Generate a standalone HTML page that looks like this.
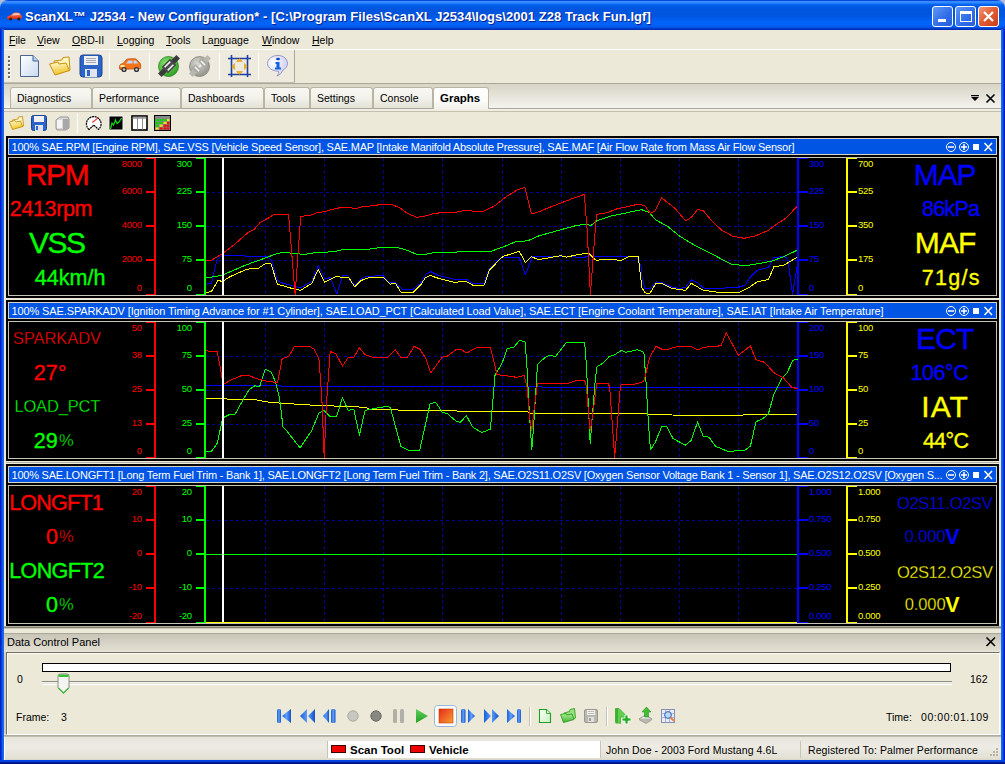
<!DOCTYPE html>
<html><head><meta charset="utf-8">
<style>
*{margin:0;padding:0;box-sizing:border-box}
html,body{width:1005px;height:764px;overflow:hidden;background:#ECE9D8;font-family:"Liberation Sans",sans-serif;font-size:11px;color:#000}
body{position:relative}
.a{position:absolute}
.nw{white-space:nowrap}
#title{left:0;top:0;width:1005px;height:30px;border-radius:8px 8px 0 0;background:linear-gradient(180deg,#0848E0 0px,#0848E0 1px,#3A8EFF 1px,#3088FF 3px,#0C6CF8 4px,#0060EC 5px,#005AE4 7px,#0055DE 9px,#0055DE 15px,#005AEA 18px,#0064F8 22px,#0062F6 25px,#0058EC 27px,#0048D8 28px,#0034C0 29px,#0028A8 30px)}
#title .t{left:25px;top:9px;letter-spacing:0.05px;color:#fff;font-weight:bold;font-size:13px;text-shadow:1px 1px 0 #0A1E8C}
.brd{background:linear-gradient(90deg,#0019B0 0,#0025D8 1px,#0A4FE0 2px,#1A6CF0 3px,#1466EE 4px)}
.brdr{background:linear-gradient(270deg,#0019B0 0,#0025D8 1px,#0A4FE0 2px,#1A6CF0 3px,#1466EE 4px)}
.wbtn{top:6px;width:21px;height:21px;border:1px solid #fff;border-radius:3px}
.menu span{position:absolute;top:33.5px;font-size:10.5px;white-space:nowrap}
.menu u{text-decoration:underline;text-underline-offset:1px}
.sep{position:absolute;width:1px;background:#C5C2B2;border-right:1px solid #fff}
.tab{position:absolute;top:87px;height:21px;border:1px solid #B8B5A2;border-bottom:none;border-radius:3px 3px 0 0;background:linear-gradient(#F9F8F4,#F1F0E9 55%,#E4E2D5);font-size:10.5px;line-height:12px;padding:4px 0 0 6px;white-space:nowrap}
.tab.sel{height:22px;background:linear-gradient(#FFFFFF,#FBFBF9 60%,#F2F1EA);font-weight:bold;font-size:11.5px;padding-top:3.5px}
.st{position:absolute;font-size:10.5px;line-height:12px;white-space:nowrap}
</style></head><body>
<!-- window chrome -->
<div class="a" style="left:0;top:0;width:10px;height:10px;background:#B0BCD8"></div><div class="a" style="left:995px;top:0;width:10px;height:10px;background:#B0BCD8"></div>
<div id="title" class="a"><div class="t a nw">ScanXL™ J2534 - New Configuration* - [C:\Program Files\ScanXL J2534\logs\2001 Z28 Track Fun.lgf]</div></div>
<svg class="a" style="left:6px;top:11px" width="17" height="10" viewBox="0 0 17 10"><defs><linearGradient id="tcg" x1="0" y1="0" x2="0" y2="1"><stop offset="0" stop-color="#FF8060"/><stop offset="1" stop-color="#D82808"/></linearGradient></defs><path d="M1 6.8C1 5.6 2.2 5 4.2 4.6L7 2.2C8.2 1.4 12 1.3 13.6 2.1L15.4 4.2C16.1 5 16.1 6.6 15.7 7.6L2.2 8.4C1.4 8.2 1 7.6 1 6.8Z" fill="url(#tcg)"/><path d="M5.6 4.5L7.8 2.6C9.2 2 11.6 2 12.9 2.6L14.1 4.1Z" fill="#F8C8B8"/><circle cx="4.6" cy="8.1" r="1.5" fill="#3A1A10"/><circle cx="12.8" cy="8.1" r="1.5" fill="#3A1A10"/></svg>
<div class="a wbtn" style="left:932px;background:linear-gradient(135deg,#5E98F8,#2F6CE8 60%,#2A5FD8)"><div class="a" style="left:5px;top:12px;width:8px;height:3px;background:#fff"></div></div>
<div class="a wbtn" style="left:955px;background:linear-gradient(135deg,#5E98F8,#2F6CE8 60%,#2A5FD8)"><div class="a" style="left:4px;top:4px;width:12px;height:11px;border:1px solid #fff;border-top:3px solid #fff"></div></div>
<div class="a wbtn" style="left:978px;background:linear-gradient(135deg,#F0987A,#E25A30 50%,#C8401A)"><svg class="a" style="left:3px;top:3px" width="13" height="13"><path d="M2 2L11 11M11 2L2 11" stroke="#fff" stroke-width="2.2"/></svg></div>
<div class="a brd" style="left:0;top:29px;width:4px;height:735px"></div>
<div class="a brdr" style="left:1001px;top:29px;width:4px;height:735px"></div>
<div class="a" style="left:0;top:760px;width:1005px;height:4px;background:linear-gradient(#0046E6 0,#0040DC 2px,#00209A 2px,#001080 4px)"></div>

<!-- menu -->
<div class="menu">
  <span style="left:9px"><u>F</u>ile</span>
  <span style="left:37px"><u>V</u>iew</span>
  <span style="left:72px"><u>O</u>BD-II</span>
  <span style="left:117px"><u>L</u>ogging</span>
  <span style="left:166px"><u>T</u>ools</span>
  <span style="left:202px">La<u>n</u>guage</span>
  <span style="left:262px"><u>W</u>indow</span>
  <span style="left:312px"><u>H</u>elp</span>
</div>
<div class="a" style="left:4px;top:49px;width:997px;height:1px;background:#fff"></div>

<!-- main toolbar -->
<div class="a" style="left:4px;top:50px;width:291px;height:32px;background:#EEEBDE;border-right:1px solid #ACA899"></div><div class="a" style="left:4px;top:82px;width:291px;height:1px;background:#C4C0B0"></div>
<div class="a" style="left:4px;top:83px;width:997px;height:1px;background:#ACA899"></div>
<svg class="a" style="left:7px;top:55px" width="5" height="25"><rect x="2" y="2" width="2" height="2" fill="#fff"/><rect x="1" y="1" width="2" height="2" fill="#6A6A60"/><rect x="2" y="6" width="2" height="2" fill="#fff"/><rect x="1" y="5" width="2" height="2" fill="#6A6A60"/><rect x="2" y="10" width="2" height="2" fill="#fff"/><rect x="1" y="9" width="2" height="2" fill="#6A6A60"/><rect x="2" y="14" width="2" height="2" fill="#fff"/><rect x="1" y="13" width="2" height="2" fill="#6A6A60"/><rect x="2" y="18" width="2" height="2" fill="#fff"/><rect x="1" y="17" width="2" height="2" fill="#6A6A60"/><rect x="2" y="22" width="2" height="2" fill="#fff"/><rect x="1" y="21" width="2" height="2" fill="#6A6A60"/></svg>
<!-- new doc -->
<svg class="a" style="left:19px;top:54px" width="22" height="24"><defs><linearGradient id="gd" x1="0" y1="0" x2="1" y2="1"><stop offset="0" stop-color="#fff"/><stop offset="1" stop-color="#C8DAF0"/></linearGradient></defs><path d="M1.5 1.5H14L19.5 7V22.5H1.5Z" fill="url(#gd)" stroke="#4A6494"/><path d="M14 1.5V7H19.5" fill="#B0CCEC" stroke="#4A6494"/></svg>
<!-- folder -->
<svg class="a" style="left:48px;top:55px" width="24" height="22"><defs><linearGradient id="gf" x1="0" y1="0" x2=".3" y2="1"><stop offset="0" stop-color="#FFFCE0"/><stop offset="1" stop-color="#F0C428"/></linearGradient></defs><path d="M6 6L14 5L15 2.5L21 2L22 15L8 18.5Z" fill="#FFF6C0" stroke="#C8900C" stroke-width="1"/><path d="M1.5 9L10 7L11 9L18 8L21.5 15.5L7 20Z" fill="url(#gf)" stroke="#C8900C" stroke-width="1"/></svg>
<!-- save -->
<svg class="a" style="left:79px;top:54px" width="24" height="24"><rect x="1" y="1" width="22" height="22" rx="3" fill="#2C64C8" stroke="#1A4696"/><rect x="5" y="2" width="14" height="9" fill="#F0F0F0"/><path d="M7 4.5H17M7 6.5H17M7 8.5H17" stroke="#A0A8B8"/><rect x="6" y="15" width="12" height="8" fill="#E0E4EC"/><rect x="8" y="16" width="3" height="6" fill="#2C64C8"/></svg>
<div class="sep" style="left:109px;top:53px;height:27px"></div>
<!-- car -->
<svg class="a" style="left:118px;top:57px" width="24" height="17"><path d="M1.5 9.5C1.5 7.5 3 7 5 6.5L8.5 2.5C9.5 1.8 15 1.5 18 2L21.5 5.5C22.7 6.5 23 9 22.5 11.5L2 12.5C1.5 11.8 1.5 10.5 1.5 9.5Z" fill="#F27418" stroke="#C04A08" stroke-width=".8"/><path d="M8 6.5L10.5 3.5H14.5V6.5ZM15.5 3.5H18L20 6.5H15.5Z" fill="#C4D8F4"/><rect x="2.5" y="8" width="4" height="2" fill="#FFE8A0"/><circle cx="6" cy="12.5" r="2.6" fill="#333"/><circle cx="6" cy="12.5" r="1.2" fill="#ccc"/><circle cx="18.5" cy="12.5" r="2.6" fill="#333"/><circle cx="18.5" cy="12.5" r="1.2" fill="#ccc"/></svg>
<div class="sep" style="left:149px;top:53px;height:27px"></div>
<!-- connect green -->
<svg class="a" style="left:157px;top:54px" width="24" height="24"><defs><radialGradient id="gcg" cx=".4" cy=".35" r=".7"><stop offset="0" stop-color="#8CE870"/><stop offset="1" stop-color="#2A9A20"/></radialGradient></defs><circle cx="11.5" cy="12.5" r="10" fill="url(#gcg)" stroke="#2A8020" stroke-width=".8"/><g transform="rotate(-45 12 12)"><rect x="-1" y="9.5" width="8" height="5" fill="#3A3A3A"/><rect x="17" y="9.5" width="8" height="5" fill="#3A3A3A"/><rect x="6" y="7.5" width="12" height="9" rx="1" fill="#4A4A4A"/><rect x="8" y="9" width="8" height="1.6" fill="#F0F0F0"/><rect x="8" y="13.4" width="8" height="1.6" fill="#F0F0F0"/></g></svg>
<svg class="a" style="left:188px;top:54px" width="24" height="24"><defs><radialGradient id="gcr" cx=".4" cy=".35" r=".7"><stop offset="0" stop-color="#D8D8D0"/><stop offset="1" stop-color="#909088"/></radialGradient></defs><circle cx="11.5" cy="12.5" r="10" fill="url(#gcr)" stroke="#808078" stroke-width=".8"/><g transform="rotate(-45 12 12)"><rect x="-1" y="9.5" width="8" height="5" fill="#B8B8B0"/><rect x="17" y="9.5" width="8" height="5" fill="#B8B8B0"/><rect x="5" y="7.5" width="5" height="9" rx="1" fill="#A8A8A0"/><rect x="14" y="7.5" width="5" height="9" rx="1" fill="#A8A8A0"/><rect x="7" y="9" width="1.5" height="6" fill="#F4F4F4"/><rect x="15.5" y="9" width="1.5" height="6" fill="#F4F4F4"/><rect x="10.5" y="11" width="3" height="2" fill="#F4F4F4"/></g></svg>
<div class="sep" style="left:219px;top:53px;height:27px"></div>
<!-- fit -->
<svg class="a" style="left:227px;top:54px" width="24" height="24"><path d="M4.5 1V23M20.5 1V23M1 4.5H24M1 20.5H24" stroke="#1C3FA0" stroke-width="1.6"/><path d="M9.5 7.5H15.5L12.5 4.5ZM9.5 17.5H15.5L12.5 20.5ZM7.5 9.5V15.5L4.8 12.5ZM17.5 9.5V15.5L20.2 12.5Z" fill="#F0B018" stroke="#D89010" stroke-width=".5"/></svg>
<div class="sep" style="left:258px;top:53px;height:27px"></div>
<!-- info -->
<svg class="a" style="left:266px;top:54px" width="24" height="24"><defs><radialGradient id="gi" cx=".3" cy=".35" r=".8"><stop offset="0" stop-color="#fff"/><stop offset="1" stop-color="#C8C8F4"/></radialGradient></defs><path d="M12 1.5C17.5 1.5 21.5 5 21.5 9.5C21.5 12.5 19.5 14.8 17 16C16 18.5 14 21 11 22C12.5 20 13 18.5 12.5 17.2C6.5 17.2 1.5 14 1.5 9.5C1.5 5 6 1.5 12 1.5Z" fill="url(#gi)" stroke="#9090C0" stroke-width=".9"/><ellipse cx="12" cy="5" rx="2" ry="1.3" fill="#0A4CC8"/><path d="M9.5 8H13.5V13.5H15V15.5H9V13.5H10.5V10H9.5Z" fill="#1060E0"/></svg>

<!-- tab strip -->
<div class="a" style="left:4px;top:84px;width:997px;height:24px;background:linear-gradient(#D8D5C6,#E6E4DA 50%,#F4F3EE)"></div>
<div class="a" style="left:4px;top:108px;width:997px;height:1px;background:#ACA899"></div>
<div class="a" style="left:4px;top:109px;width:997px;height:2px;background:#F0EEE4"></div>
<div class="a" style="left:4px;top:111px;width:997px;height:1px;background:#C4C0AE"></div>
<div class="tab" style="left:10px;width:82px">Diagnostics</div>
<div class="tab" style="left:92px;width:89px">Performance</div>
<div class="tab" style="left:181px;width:83px">Dashboards</div>
<div class="tab" style="left:264px;width:46px">Tools</div>
<div class="tab" style="left:310px;width:63px">Settings</div>
<div class="tab" style="left:373px;width:60px">Console</div>
<div class="tab sel" style="left:433px;width:56px">Graphs</div>
<svg class="a" style="left:970px;top:93px" width="30" height="12"><path d="M1 4H9L5 8Z" fill="#000"/><rect x="1" y="2" width="8" height="1.2" fill="#000"/><path d="M16.5 1.5L24.5 9.5M24.5 1.5L16.5 9.5" stroke="#000" stroke-width="1.6"/></svg>

<!-- graph toolbar -->
<svg class="a" style="left:8px;top:115px" width="17" height="16"><defs><linearGradient id="fsg" x1="0" y1="0" x2=".3" y2="1"><stop offset="0" stop-color="#FFFDE8"/><stop offset="1" stop-color="#F2C820"/></linearGradient></defs><path d="M4.5 5L10 4L10.5 2L14.5 1.5L15.5 11L5.5 13.5Z" fill="#FFF8C8" stroke="#C8900C" stroke-width=".9"/><path d="M1.5 7L7 5.5L8 7L12.5 6L14.5 11.5L4.5 14.5Z" fill="url(#fsg)" stroke="#C8900C" stroke-width=".9"/></svg>
<svg class="a" style="left:31px;top:115px" width="17" height="17"><rect x=".5" y=".5" width="15" height="15" rx="2" fill="#2C64C8" stroke="#1A4696"/><rect x="3" y="1" width="10" height="6" fill="#F0F0F0"/><rect x="4" y="10" width="8" height="6" fill="#E0E4EC"/><rect x="5" y="11" width="2" height="4" fill="#2C64C8"/></svg>
<svg class="a" style="left:54px;top:115px" width="17" height="17"><path d="M2 5L6 2H14L15 4V13L12 15H3L2 13Z" fill="#D8D8D8" stroke="#989898"/><path d="M9 4H15V13L12 15H9Z" fill="#A8A8A8"/><rect x="3" y="5" width="5" height="8" fill="#F4F4F4"/></svg>
<div class="sep" style="left:77px;top:114px;height:19px"></div>
<svg class="a" style="left:85px;top:114px" width="18" height="18"><path d="M4 15.5A7.3 7.3 0 1 1 13.5 15.5L8.8 11Z" fill="#fff" stroke="#000" stroke-width="1.2" stroke-dasharray="2,0.6"/><path d="M7.3 8.5L13 3.8" stroke="#F03030" stroke-width="1.1"/></svg>
<svg class="a" style="left:108px;top:115px" width="16" height="16"><rect x="1" y="1" width="14" height="14" fill="#000" stroke="#F4F4F0" stroke-width="1"/><path d="M2.5 14L4 8L5.5 10L7.5 5L9 8.5L11 7L13.5 3" stroke="#10E010" stroke-width="1.2" fill="none"/></svg>
<svg class="a" style="left:131px;top:115px" width="17" height="16"><rect x="1" y="1" width="15" height="14" fill="#fff" stroke="#000" stroke-width="1.6"/><rect x="1.8" y="1.8" width="13.4" height="2" fill="#A0A0A0"/><path d="M6.5 2V14.5M11.5 2V14.5" stroke="#909090" stroke-width="1"/></svg>
<svg class="a" style="left:154px;top:115px" width="17" height="16"><rect x="0" y="0" width="17" height="16" fill="#000"/><rect x="1" y="1" width="15" height="14" fill="#888"/><rect x="1.5" y="4" width="3.2" height="2.2" fill="#10D010"/><rect x="5.5" y="4" width="3.2" height="2.2" fill="#10D010"/><rect x="9.5" y="4" width="3.2" height="2.2" fill="#10D010"/><rect x="13" y="4" width="2.5" height="2.2" fill="#F0E020"/><rect x="1.5" y="6.8" width="3.2" height="2.2" fill="#10D010"/><rect x="5.5" y="6.8" width="3.2" height="2.2" fill="#10D010"/><rect x="9.5" y="6.8" width="3.2" height="2.2" fill="#F0E020"/><rect x="13" y="6.8" width="2.5" height="2.2" fill="#E01010"/><rect x="1.5" y="9.6" width="3.2" height="2.2" fill="#10D010"/><rect x="5.5" y="9.6" width="3.2" height="2.2" fill="#F0E020"/><rect x="9.5" y="9.6" width="3.2" height="2.2" fill="#E01010"/><rect x="13" y="9.6" width="2.5" height="2.2" fill="#E01010"/><rect x="1.5" y="12.4" width="3.2" height="2.2" fill="#F0E020"/><rect x="5.5" y="12.4" width="3.2" height="2.2" fill="#E01010"/><rect x="9.5" y="12.4" width="3.2" height="2.2" fill="#E01010"/><rect x="13" y="12.4" width="2.5" height="2.2" fill="#E01010"/></svg>

<svg class="a" style="left:0;top:0" width="1005" height="764" font-family="Liberation Sans, sans-serif">
<rect x="6" y="136" width="993" height="490" fill="#000"/>
<rect x="6" y="298" width="993" height="2" fill="#ECE9D8"/>
<rect x="6" y="461" width="993" height="3" fill="#ECE9D8"/><rect x="6" y="462" width="993" height="1" fill="#B4B0A0"/>
<rect x="8" y="138" width="989" height="17" fill="#D8D4C8"/>
<rect x="9" y="139" width="987" height="15" fill="#0055E5"/>
<text x="11.5" y="151" fill="#fff" font-size="11" textLength="783" lengthAdjust="spacing">100% SAE.RPM [Engine RPM], SAE.VSS [Vehicle Speed Sensor], SAE.MAP [Intake Manifold Absolute Pressure], SAE.MAF [Air Flow Rate from Mass Air Flow Sensor]</text>
<circle cx="951" cy="147" r="4.5" fill="none" stroke="#fff" stroke-width="1"/><rect x="948" y="146.25" width="6" height="1.5" fill="#fff"/>
<circle cx="964" cy="147" r="4.5" fill="none" stroke="#fff" stroke-width="1"/><rect x="961" y="146.25" width="6" height="1.5" fill="#fff"/><rect x="963.25" y="144" width="1.5" height="6" fill="#fff"/>
<rect x="973" y="144" width="6" height="6" fill="#fff"/>
<path d="M984.5 143L992 151M992 143L984.5 151" stroke="#fff" stroke-width="1.5"/>
<rect x="8" y="157" width="989" height="139" fill="#C8C4B4"/>
<rect x="9" y="158" width="987" height="137" fill="#000"/>
<path d="M265.5 158V295M324.5 158V295M383.5 158V295M442.5 158V295M502.5 158V295M561.5 158V295M620.5 158V295M679.5 158V295M738.5 158V295M206 192.5H797M206 226.5H797M206 260.5H797" stroke="#0000A0" stroke-width="1" stroke-dasharray="3,3" fill="none"/>
<rect x="154" y="158" width="2" height="137" fill="#FF0000"/>
<rect x="146" y="158" width="8" height="1" fill="#FF0000"/>
<text x="141.8" y="167" fill="#FF0000" font-size="9.5" letter-spacing="-0.3" text-anchor="end">8000</text>
<rect x="146" y="191" width="8" height="2" fill="#FF0000"/>
<text x="141.8" y="194" fill="#FF0000" font-size="9.5" letter-spacing="-0.3" text-anchor="end">6000</text>
<rect x="146" y="225" width="8" height="2" fill="#FF0000"/>
<text x="141.8" y="228" fill="#FF0000" font-size="9.5" letter-spacing="-0.3" text-anchor="end">4000</text>
<rect x="146" y="259" width="8" height="2" fill="#FF0000"/>
<text x="141.8" y="262" fill="#FF0000" font-size="9.5" letter-spacing="-0.3" text-anchor="end">2000</text>
<rect x="146" y="294" width="8" height="1" fill="#FF0000"/>
<text x="141.8" y="291" fill="#FF0000" font-size="9.5" letter-spacing="-0.3" text-anchor="end">0</text>
<rect x="204" y="158" width="2" height="137" fill="#00FF00"/>
<rect x="196" y="158" width="8" height="1" fill="#00FF00"/>
<text x="191.8" y="167" fill="#00FF00" font-size="9.5" letter-spacing="-0.3" text-anchor="end">300</text>
<rect x="196" y="191" width="8" height="2" fill="#00FF00"/>
<text x="191.8" y="194" fill="#00FF00" font-size="9.5" letter-spacing="-0.3" text-anchor="end">225</text>
<rect x="196" y="225" width="8" height="2" fill="#00FF00"/>
<text x="191.8" y="228" fill="#00FF00" font-size="9.5" letter-spacing="-0.3" text-anchor="end">150</text>
<rect x="196" y="259" width="8" height="2" fill="#00FF00"/>
<text x="191.8" y="262" fill="#00FF00" font-size="9.5" letter-spacing="-0.3" text-anchor="end">75</text>
<rect x="196" y="294" width="8" height="1" fill="#00FF00"/>
<text x="191.8" y="291" fill="#00FF00" font-size="9.5" letter-spacing="-0.3" text-anchor="end">0</text>
<rect x="797" y="158" width="2" height="137" fill="#0000FF"/>
<rect x="799" y="158" width="9" height="1" fill="#0000FF"/>
<text x="809" y="167" fill="#0000FF" font-size="9.5" letter-spacing="-0.3">300</text>
<rect x="799" y="191" width="9" height="2" fill="#0000FF"/>
<text x="809" y="194" fill="#0000FF" font-size="9.5" letter-spacing="-0.3">225</text>
<rect x="799" y="225" width="9" height="2" fill="#0000FF"/>
<text x="809" y="228" fill="#0000FF" font-size="9.5" letter-spacing="-0.3">150</text>
<rect x="799" y="259" width="9" height="2" fill="#0000FF"/>
<text x="809" y="262" fill="#0000FF" font-size="9.5" letter-spacing="-0.3">75</text>
<rect x="799" y="294" width="9" height="1" fill="#0000FF"/>
<text x="809" y="291" fill="#0000FF" font-size="9.5" letter-spacing="-0.3">0</text>
<rect x="846" y="158" width="2" height="137" fill="#FFFF00"/>
<rect x="848" y="158" width="9" height="1" fill="#FFFF00"/>
<text x="858" y="167" fill="#FFFF00" font-size="9.5" letter-spacing="-0.3">700</text>
<rect x="848" y="191" width="9" height="2" fill="#FFFF00"/>
<text x="858" y="194" fill="#FFFF00" font-size="9.5" letter-spacing="-0.3">525</text>
<rect x="848" y="225" width="9" height="2" fill="#FFFF00"/>
<text x="858" y="228" fill="#FFFF00" font-size="9.5" letter-spacing="-0.3">350</text>
<rect x="848" y="259" width="9" height="2" fill="#FFFF00"/>
<text x="858" y="262" fill="#FFFF00" font-size="9.5" letter-spacing="-0.3">175</text>
<rect x="848" y="294" width="9" height="1" fill="#FFFF00"/>
<text x="858" y="291" fill="#FFFF00" font-size="9.5" letter-spacing="-0.3">0</text>
<polyline points="205.9,284.2 211.4,283.3 217.0,260.0 222.6,254.4 226.3,255.7 241.2,255.4 246.7,256.3 267.2,256.3 271.8,261.0 277.4,280.5 282.1,282.9 293.2,286.0 300.7,287.9 311.8,281.4 318.3,265.6 324.8,278.6 330.4,277.7 336.9,294.0 342.5,275.8 348.0,275.8 350.0,280.5 354.6,285.1 361.2,279.2 366.7,276.2 383.5,275.8 389.0,282.9 395.5,282.9 402.0,289.2 413.2,289.2 420.6,283.3 426.2,273.6 430.9,271.7 438.3,275.4 454.1,279.2 466.2,279.2 472.7,283.3 483.8,283.3 489.4,268.4 500.0,258.2 503.4,257.6 519.2,257.2 525.4,274.9 532.2,256.9 538.8,256.3 585.2,257.2 588.9,255.4 594.5,256.3 637.3,256.9 641.0,266.5 642.0,276.7 644.8,288.8 650.4,288.8 656.0,281.8 662.4,282.9 671.7,287.0 679.2,288.5 685.7,287.3 691.3,279.9 697.8,282.9 704.3,288.5 729.4,287.9 738.7,287.3 745.2,285.1 749.8,277.7 757.2,270.2 768.4,267.5 774.0,257.6 785.1,256.3 787.9,260.0 792.6,294.4 797.2,265.6" fill="none" stroke="#0000FF" stroke-width="1" stroke-linejoin="round" shape-rendering="crispEdges"/>
<polyline points="205.9,292.5 211.4,291.6 217.9,280.5 222.6,281.4 230.0,276.7 246.7,269.3 258.8,268.0 265.3,263.7 270.9,263.7 277.4,284.2 293.2,288.8 300.7,290.3 311.8,283.3 318.3,269.3 324.8,282.3 336.0,276.7 349.0,277.7 354.6,287.0 361.2,280.5 368.6,277.7 383.5,277.7 390.0,284.2 395.5,283.3 401.1,292.5 413.2,292.5 420.6,285.1 425.3,277.7 429.9,275.4 437.4,278.0 454.1,282.3 466.2,281.4 472.7,285.1 483.8,286.0 489.4,270.2 500.0,259.1 503.4,256.3 519.2,251.3 525.4,262.4 531.3,256.9 538.8,259.5 561.1,255.7 566.6,257.2 574.1,255.4 584.3,253.5 588.9,253.5 596.4,260.6 603.8,259.1 616.8,260.0 620.5,260.9 628.0,256.9 638.2,256.9 642.0,287.9 644.8,292.5 649.4,294.0 656.0,283.3 662.4,283.6 671.7,288.5 685.7,290.3 691.3,283.3 703.3,290.3 720.1,292.5 738.7,292.5 749.8,287.0 757.2,281.8 768.4,279.5 774.0,266.5 783.3,265.6 797.2,257.2" fill="none" stroke="#FFFF00" stroke-width="1" stroke-linejoin="round" shape-rendering="crispEdges"/>
<polyline points="205.9,277.7 215.2,276.7 222.6,274.9 233.7,270.2 246.7,264.7 259.8,260.0 267.2,257.2 278.3,253.1 285.8,252.6 304.4,254.4 315.5,252.6 334.1,251.7 343.4,249.4 354.0,249.4 366.7,249.4 381.6,247.4 396.5,247.4 405.8,249.8 416.9,254.4 426.2,254.1 435.5,252.2 456.0,252.2 461.5,251.3 491.3,251.3 500.0,247.9 505.3,246.1 516.4,241.4 527.6,240.9 538.8,235.9 561.1,229.7 576.0,225.6 585.2,224.1 590.8,225.6 596.4,221.0 611.2,216.0 626.1,213.0 637.3,210.4 642.0,209.8 649.4,212.6 655.9,220.0 668.0,226.6 679.2,235.9 695.9,246.1 716.3,256.3 731.2,264.3 746.1,265.6 761.0,263.2 772.1,261.0 783.3,256.9 797.2,250.2" fill="none" stroke="#00FF00" stroke-width="1" stroke-linejoin="round" shape-rendering="crispEdges"/>
<polyline points="205.9,260.4 211.4,260.4 222.6,253.5 233.7,245.1 248.6,232.1 254.2,229.3 259.8,222.8 268.1,218.2 273.7,214.5 288.6,214.5 295.1,294.4 300.7,216.3 310.0,215.4 317.4,212.6 324.8,211.7 334.1,208.9 341.5,207.4 350.8,207.4 354.6,208.9 361.2,207.0 374.2,205.6 381.6,204.3 392.8,204.8 400.2,208.0 407.6,213.6 416.9,217.3 424.3,216.3 431.8,214.1 441.1,212.6 456.0,212.2 465.2,210.4 472.7,211.1 483.8,211.1 493.1,206.7 496.0,204.8 507.2,195.9 518.3,189.4 524.8,187.5 531.3,213.6 536.9,212.6 548.0,208.0 559.2,203.7 572.2,198.7 584.3,194.4 587.1,229.3 590.4,294.4 596.4,214.5 607.5,212.6 616.8,208.9 626.1,207.0 635.4,204.8 641.0,204.8 644.8,205.6 650.4,213.6 655.0,210.8 661.5,197.8 669.9,204.3 675.5,208.9 685.7,221.0 691.3,217.3 697.8,209.3 703.3,210.8 712.6,221.9 721.9,230.3 733.1,236.4 744.2,238.3 755.4,235.9 768.4,230.3 775.8,224.7 787.0,217.3 797.2,206.1" fill="none" stroke="#FF0000" stroke-width="1" stroke-linejoin="round" shape-rendering="crispEdges"/>
<rect x="222" y="158" width="2" height="137" fill="#fff"/>
<rect x="8" y="302" width="989" height="17" fill="#D8D4C8"/>
<rect x="9" y="303" width="987" height="15" fill="#0055E5"/>
<text x="11.5" y="315" fill="#fff" font-size="11" textLength="872" lengthAdjust="spacing">100% SAE.SPARKADV [Ignition Timing Advance for #1 Cylinder], SAE.LOAD_PCT [Calculated Load Value], SAE.ECT [Engine Coolant Temperature], SAE.IAT [Intake Air Temperature]</text>
<circle cx="951" cy="311" r="4.5" fill="none" stroke="#fff" stroke-width="1"/><rect x="948" y="310.25" width="6" height="1.5" fill="#fff"/>
<circle cx="964" cy="311" r="4.5" fill="none" stroke="#fff" stroke-width="1"/><rect x="961" y="310.25" width="6" height="1.5" fill="#fff"/><rect x="963.25" y="308" width="1.5" height="6" fill="#fff"/>
<rect x="973" y="308" width="6" height="6" fill="#fff"/>
<path d="M984.5 307L992 315M992 307L984.5 315" stroke="#fff" stroke-width="1.5"/>
<rect x="8" y="321" width="989" height="138" fill="#C8C4B4"/>
<rect x="9" y="322" width="987" height="136" fill="#000"/>
<path d="M265.5 322V458M324.5 322V458M383.5 322V458M442.5 322V458M502.5 322V458M561.5 322V458M620.5 322V458M679.5 322V458M738.5 322V458M206 356.5H797M206 390.5H797M206 424.5H797" stroke="#0000A0" stroke-width="1" stroke-dasharray="3,3" fill="none"/>
<rect x="154" y="322" width="2" height="136" fill="#FF0000"/>
<rect x="146" y="322" width="8" height="1" fill="#FF0000"/>
<text x="141.8" y="331" fill="#FF0000" font-size="9.5" letter-spacing="-0.3" text-anchor="end">50</text>
<rect x="146" y="355" width="8" height="2" fill="#FF0000"/>
<text x="141.8" y="358" fill="#FF0000" font-size="9.5" letter-spacing="-0.3" text-anchor="end">38</text>
<rect x="146" y="389" width="8" height="2" fill="#FF0000"/>
<text x="141.8" y="392" fill="#FF0000" font-size="9.5" letter-spacing="-0.3" text-anchor="end">25</text>
<rect x="146" y="423" width="8" height="2" fill="#FF0000"/>
<text x="141.8" y="426" fill="#FF0000" font-size="9.5" letter-spacing="-0.3" text-anchor="end">13</text>
<rect x="146" y="457" width="8" height="1" fill="#FF0000"/>
<text x="141.8" y="454" fill="#FF0000" font-size="9.5" letter-spacing="-0.3" text-anchor="end">0</text>
<rect x="204" y="322" width="2" height="136" fill="#00FF00"/>
<rect x="196" y="322" width="8" height="1" fill="#00FF00"/>
<text x="191.8" y="331" fill="#00FF00" font-size="9.5" letter-spacing="-0.3" text-anchor="end">100</text>
<rect x="196" y="355" width="8" height="2" fill="#00FF00"/>
<text x="191.8" y="358" fill="#00FF00" font-size="9.5" letter-spacing="-0.3" text-anchor="end">75</text>
<rect x="196" y="389" width="8" height="2" fill="#00FF00"/>
<text x="191.8" y="392" fill="#00FF00" font-size="9.5" letter-spacing="-0.3" text-anchor="end">50</text>
<rect x="196" y="423" width="8" height="2" fill="#00FF00"/>
<text x="191.8" y="426" fill="#00FF00" font-size="9.5" letter-spacing="-0.3" text-anchor="end">25</text>
<rect x="196" y="457" width="8" height="1" fill="#00FF00"/>
<text x="191.8" y="454" fill="#00FF00" font-size="9.5" letter-spacing="-0.3" text-anchor="end">0</text>
<rect x="797" y="322" width="2" height="136" fill="#0000FF"/>
<rect x="799" y="322" width="9" height="1" fill="#0000FF"/>
<text x="809" y="331" fill="#0000FF" font-size="9.5" letter-spacing="-0.3">200</text>
<rect x="799" y="355" width="9" height="2" fill="#0000FF"/>
<text x="809" y="358" fill="#0000FF" font-size="9.5" letter-spacing="-0.3">150</text>
<rect x="799" y="389" width="9" height="2" fill="#0000FF"/>
<text x="809" y="392" fill="#0000FF" font-size="9.5" letter-spacing="-0.3">100</text>
<rect x="799" y="423" width="9" height="2" fill="#0000FF"/>
<text x="809" y="426" fill="#0000FF" font-size="9.5" letter-spacing="-0.3">50</text>
<rect x="799" y="457" width="9" height="1" fill="#0000FF"/>
<text x="809" y="454" fill="#0000FF" font-size="9.5" letter-spacing="-0.3">0</text>
<rect x="846" y="322" width="2" height="136" fill="#FFFF00"/>
<rect x="848" y="322" width="9" height="1" fill="#FFFF00"/>
<text x="858" y="331" fill="#FFFF00" font-size="9.5" letter-spacing="-0.3">100</text>
<rect x="848" y="355" width="9" height="2" fill="#FFFF00"/>
<text x="858" y="358" fill="#FFFF00" font-size="9.5" letter-spacing="-0.3">75</text>
<rect x="848" y="389" width="9" height="2" fill="#FFFF00"/>
<text x="858" y="392" fill="#FFFF00" font-size="9.5" letter-spacing="-0.3">50</text>
<rect x="848" y="423" width="9" height="2" fill="#FFFF00"/>
<text x="858" y="426" fill="#FFFF00" font-size="9.5" letter-spacing="-0.3">25</text>
<rect x="848" y="457" width="9" height="1" fill="#FFFF00"/>
<text x="858" y="454" fill="#FFFF00" font-size="9.5" letter-spacing="-0.3">0</text>
<polyline points="205.9,385.3 279.4,385.5 281.3,386.2 354.0,386.2 500.0,386.8 642.0,387.5 797.0,387.7" fill="none" stroke="#0000FF" stroke-width="1" stroke-linejoin="round" shape-rendering="crispEdges"/>
<polyline points="205.9,398.5 226.6,399.0 256.8,400.0 270.0,402.4 298.2,404.3 320.8,405.6 354.0,406.6 366.0,407.5 370.0,409.4 412.0,410.3 476.0,411.3 527.0,411.3 530.0,413.2 642.0,413.6 653.0,414.5 695.0,415.6 783.0,414.5 797.0,414.5" fill="none" stroke="#FFFF00" stroke-width="1" stroke-linejoin="round" shape-rendering="crispEdges"/>
<polyline points="205.9,451.4 211.5,451.4 217.2,443.3 222.8,417.9 228.5,415.0 235.1,414.1 243.6,399.0 249.2,389.6 254.9,385.8 259.6,386.8 265.2,369.3 270.9,371.7 275.6,382.1 279.4,397.1 283.1,427.3 286.9,431.1 300.1,448.0 311.4,431.1 318.9,413.2 323.7,410.3 330.2,416.9 336.8,416.0 342.5,397.5 348.1,410.3 353.8,409.4 359.4,435.2 365.1,410.3 376.4,408.1 387.7,406.2 390.5,408.1 400.9,446.5 408.4,450.3 419.7,450.3 430.1,403.7 435.7,402.4 442.3,412.2 448.0,414.1 455.5,420.7 460.2,422.6 466.4,415.6 472.5,426.9 481.9,432.6 490.4,429.2 495.1,374.5 501.7,364.2 507.3,348.5 513.9,347.2 519.6,340.2 525.2,342.1 527.1,368.9 529.5,416.0 531.8,449.9 533.7,425.4 537.5,364.2 545.0,357.6 549.7,355.3 555.4,356.6 566.7,342.1 584.6,342.1 586.4,365.1 590.2,443.3 594.9,384.0 596.8,367.0 603.4,362.8 609.1,356.6 614.7,354.7 621.3,350.4 626.0,352.3 637.3,349.7 643.9,352.3 645.8,378.3 648.6,425.4 650.5,449.9 655.2,442.4 661.8,426.4 666.5,426.4 673.1,438.6 685.3,445.2 691.0,440.5 697.6,422.0 703.3,436.7 708.9,437.1 715.5,446.2 727.8,451.4 744.7,450.3 750.4,446.2 756.0,421.7 762.6,418.8 768.3,414.1 773.9,394.3 781.5,378.7 787.1,372.7 792.8,360.4 797.5,359.1" fill="none" stroke="#00FF00" stroke-width="1" stroke-linejoin="round" shape-rendering="crispEdges"/>
<polyline points="205.9,350.4 209.7,351.5 217.2,351.5 221.9,376.4 222.8,384.9 230.4,380.2 241.7,375.5 247.3,375.1 258.6,379.2 266.2,381.1 273.7,382.1 277.5,383.0 282.2,358.5 288.8,356.6 294.4,346.3 309.5,346.3 314.2,349.1 318.9,358.5 321.8,397.1 324.2,457.4 326.5,402.8 330.2,351.5 335.9,353.8 342.5,366.0 348.1,357.6 353.8,357.2 359.4,347.8 365.1,354.7 374.5,358.0 387.7,357.6 395.2,349.7 400.9,357.2 407.5,357.2 414.1,346.3 419.7,349.1 425.4,357.6 430.6,373.0 442.3,357.2 447.0,356.3 455.5,350.0 461.2,349.7 466.8,352.9 476.2,347.8 481.9,347.2 490.4,347.2 497.0,374.5 503.5,375.5 511.1,376.4 516.7,377.4 524.3,375.5 527.1,387.7 529.9,419.8 531.8,430.7 533.7,412.2 537.5,383.6 567.6,383.6 577.0,380.2 584.6,380.2 586.4,385.8 588.3,410.3 590.2,431.1 593.0,412.2 596.8,383.6 608.7,383.6 610.0,391.5 614.7,457.4 620.4,385.8 621.3,384.3 635.4,384.0 643.0,381.7 644.8,378.3 649.5,357.6 656.1,346.3 661.8,349.1 668.4,349.1 674.0,347.2 682.5,346.3 691.0,346.6 697.6,350.0 704.2,347.2 717.4,346.3 721.2,345.3 726.2,332.7 732.5,344.4 738.1,355.3 743.8,351.0 750.4,345.9 756.0,359.8 764.5,362.3 773.9,372.7 783.3,377.9 791.8,387.4 797.5,388.7" fill="none" stroke="#FF0000" stroke-width="1" stroke-linejoin="round" shape-rendering="crispEdges"/>
<rect x="222" y="322" width="2" height="136" fill="#fff"/>
<rect x="8" y="466" width="989" height="17" fill="#D8D4C8"/>
<rect x="9" y="467" width="987" height="15" fill="#0055E5"/>
<text x="11.5" y="479" fill="#fff" font-size="11" textLength="931" lengthAdjust="spacing">100% SAE.LONGFT1 [Long Term Fuel Trim - Bank 1], SAE.LONGFT2 [Long Term Fuel Trim - Bank 2], SAE.O2S11.O2SV [Oxygen Sensor Voltage Bank 1 - Sensor 1], SAE.O2S12.O2SV [Oxygen S...</text>
<circle cx="951" cy="475" r="4.5" fill="none" stroke="#fff" stroke-width="1"/><rect x="948" y="474.25" width="6" height="1.5" fill="#fff"/>
<circle cx="964" cy="475" r="4.5" fill="none" stroke="#fff" stroke-width="1"/><rect x="961" y="474.25" width="6" height="1.5" fill="#fff"/><rect x="963.25" y="472" width="1.5" height="6" fill="#fff"/>
<rect x="973" y="472" width="6" height="6" fill="#fff"/>
<path d="M984.5 471L992 479M992 471L984.5 479" stroke="#fff" stroke-width="1.5"/>
<rect x="8" y="485" width="989" height="139" fill="#C8C4B4"/>
<rect x="9" y="486" width="987" height="137" fill="#000"/>
<path d="M265.5 486V623M324.5 486V623M383.5 486V623M442.5 486V623M502.5 486V623M561.5 486V623M620.5 486V623M679.5 486V623M738.5 486V623M206 520.5H797M206 554.5H797M206 588.5H797" stroke="#0000A0" stroke-width="1" stroke-dasharray="3,3" fill="none"/>
<rect x="154" y="486" width="2" height="137" fill="#FF0000"/>
<rect x="146" y="486" width="8" height="1" fill="#FF0000"/>
<text x="141.8" y="495" fill="#FF0000" font-size="9.5" letter-spacing="-0.3" text-anchor="end">20</text>
<rect x="146" y="519" width="8" height="2" fill="#FF0000"/>
<text x="141.8" y="522" fill="#FF0000" font-size="9.5" letter-spacing="-0.3" text-anchor="end">10</text>
<rect x="146" y="553" width="8" height="2" fill="#FF0000"/>
<text x="141.8" y="556" fill="#FF0000" font-size="9.5" letter-spacing="-0.3" text-anchor="end">0</text>
<rect x="146" y="587" width="8" height="2" fill="#FF0000"/>
<text x="141.8" y="590" fill="#FF0000" font-size="9.5" letter-spacing="-0.3" text-anchor="end">-10</text>
<rect x="146" y="622" width="8" height="1" fill="#FF0000"/>
<text x="141.8" y="619" fill="#FF0000" font-size="9.5" letter-spacing="-0.3" text-anchor="end">-20</text>
<rect x="204" y="486" width="2" height="137" fill="#00FF00"/>
<rect x="196" y="486" width="8" height="1" fill="#00FF00"/>
<text x="191.8" y="495" fill="#00FF00" font-size="9.5" letter-spacing="-0.3" text-anchor="end">20</text>
<rect x="196" y="519" width="8" height="2" fill="#00FF00"/>
<text x="191.8" y="522" fill="#00FF00" font-size="9.5" letter-spacing="-0.3" text-anchor="end">10</text>
<rect x="196" y="553" width="8" height="2" fill="#00FF00"/>
<text x="191.8" y="556" fill="#00FF00" font-size="9.5" letter-spacing="-0.3" text-anchor="end">0</text>
<rect x="196" y="587" width="8" height="2" fill="#00FF00"/>
<text x="191.8" y="590" fill="#00FF00" font-size="9.5" letter-spacing="-0.3" text-anchor="end">-10</text>
<rect x="196" y="622" width="8" height="1" fill="#00FF00"/>
<text x="191.8" y="619" fill="#00FF00" font-size="9.5" letter-spacing="-0.3" text-anchor="end">-20</text>
<rect x="797" y="486" width="2" height="137" fill="#0000FF"/>
<rect x="799" y="486" width="9" height="1" fill="#0000FF"/>
<text x="809" y="495" fill="#0000FF" font-size="9.5" letter-spacing="-0.3">1.000</text>
<rect x="799" y="519" width="9" height="2" fill="#0000FF"/>
<text x="809" y="522" fill="#0000FF" font-size="9.5" letter-spacing="-0.3">0.750</text>
<rect x="799" y="553" width="9" height="2" fill="#0000FF"/>
<text x="809" y="556" fill="#0000FF" font-size="9.5" letter-spacing="-0.3">0.500</text>
<rect x="799" y="587" width="9" height="2" fill="#0000FF"/>
<text x="809" y="590" fill="#0000FF" font-size="9.5" letter-spacing="-0.3">0.250</text>
<rect x="799" y="622" width="9" height="1" fill="#0000FF"/>
<text x="809" y="619" fill="#0000FF" font-size="9.5" letter-spacing="-0.3">0.000</text>
<rect x="846" y="486" width="2" height="137" fill="#FFFF00"/>
<rect x="848" y="486" width="9" height="1" fill="#FFFF00"/>
<text x="858" y="495" fill="#FFFF00" font-size="9.5" letter-spacing="-0.3">1.000</text>
<rect x="848" y="519" width="9" height="2" fill="#FFFF00"/>
<text x="858" y="522" fill="#FFFF00" font-size="9.5" letter-spacing="-0.3">0.750</text>
<rect x="848" y="553" width="9" height="2" fill="#FFFF00"/>
<text x="858" y="556" fill="#FFFF00" font-size="9.5" letter-spacing="-0.3">0.500</text>
<rect x="848" y="587" width="9" height="2" fill="#FFFF00"/>
<text x="858" y="590" fill="#FFFF00" font-size="9.5" letter-spacing="-0.3">0.250</text>
<rect x="848" y="622" width="9" height="1" fill="#FFFF00"/>
<text x="858" y="619" fill="#FFFF00" font-size="9.5" letter-spacing="-0.3">0.000</text>
<polyline points="206.0,554.0 797.0,554.0" fill="none" stroke="#00FF00" stroke-width="1" stroke-linejoin="round" shape-rendering="crispEdges"/>
<rect x="222" y="486" width="2" height="137" fill="#fff"/>
<text x="25.7" y="185" fill="#FF0000" font-size="30.0" font-weight="normal" letter-spacing="-1.25" stroke="#FF0000" stroke-width="0.35">RPM</text>
<text x="9.8" y="216" fill="#FF0000" font-size="21.5" font-weight="normal" letter-spacing="-0.37" stroke="#FF0000" stroke-width="0.35">2413rpm</text>
<text x="29" y="253" fill="#00FF00" font-size="30.0" font-weight="normal" letter-spacing="-1.55" stroke="#00FF00" stroke-width="0.35">VSS</text>
<text x="34.8" y="285" fill="#00FF00" font-size="21.5" font-weight="normal" letter-spacing="0.04" stroke="#00FF00" stroke-width="0.35">44km/h</text>
<text x="913.7" y="185" fill="#0000FF" font-size="30.0" font-weight="normal" letter-spacing="-1.05" stroke="#0000FF" stroke-width="0.35">MAP</text>
<text x="921.9" y="216" fill="#0000FF" font-size="21.5" font-weight="normal" letter-spacing="-0.72" stroke="#0000FF" stroke-width="0.35">86kPa</text>
<text x="914.8" y="253" fill="#FFFF00" font-size="30.0" font-weight="normal" letter-spacing="-0.9" stroke="#FFFF00" stroke-width="0.35">MAF</text>
<text x="921.8" y="284.5" fill="#FFFF00" font-size="21.5" font-weight="normal" letter-spacing="1.3" stroke="#FFFF00" stroke-width="0.35">71g/s</text>
<text x="12.8" y="344" fill="#FF0000" font-size="16.5" font-weight="normal" letter-spacing="-0.06" stroke="#000" stroke-width="0.3">SPARKADV</text>
<text x="33.7" y="380" fill="#FF0000" font-size="21.5" font-weight="normal" letter-spacing="0.2" stroke="#FF0000" stroke-width="0.35">27</text>
<text x="57.9" y="379.5" fill="#FF0000" font-size="21" font-weight="normal" letter-spacing="0.0" stroke="#FF0000" stroke-width="0.35">°</text>
<text x="14.4" y="412" fill="#00FF00" font-size="16.5" font-weight="normal" letter-spacing="-0.17" stroke="#000" stroke-width="0.3">LOAD_PCT</text>
<text x="33.7" y="448" fill="#00FF00" font-size="21.5" font-weight="normal" letter-spacing="0.2" stroke="#00FF00" stroke-width="0.35">29</text>
<text x="58.9" y="446" fill="#00FF00" font-size="16.5" font-weight="normal" letter-spacing="0.0" stroke="#000" stroke-width="0.3">%</text>
<text x="916" y="349" fill="#0000FF" font-size="30.0" font-weight="normal" letter-spacing="-0.85" stroke="#0000FF" stroke-width="0.35">ECT</text>
<text x="910.6" y="380" fill="#0000FF" font-size="21.5" font-weight="normal" letter-spacing="-0.45" stroke="#0000FF" stroke-width="0.35">106°C</text>
<text x="921.3" y="417" fill="#FFFF00" font-size="30.0" font-weight="normal" letter-spacing="1.05" stroke="#FFFF00" stroke-width="0.35">IAT</text>
<text x="923" y="448" fill="#FFFF00" font-size="21.5" font-weight="normal" letter-spacing="-0.67" stroke="#FFFF00" stroke-width="0.35">44°C</text>
<text x="9.2" y="510" fill="#FF0000" font-size="21.5" font-weight="normal" letter-spacing="-0.77" stroke="#FF0000" stroke-width="0.35">LONGFT1</text>
<text x="46" y="544" fill="#FF0000" font-size="21.5" font-weight="normal" letter-spacing="0.0" stroke="#FF0000" stroke-width="0.35">0</text>
<text x="58.9" y="542" fill="#FF0000" font-size="16.5" font-weight="normal" letter-spacing="0.0" stroke="#000" stroke-width="0.3">%</text>
<text x="9.2" y="578" fill="#00FF00" font-size="21.5" font-weight="normal" letter-spacing="-0.6" stroke="#00FF00" stroke-width="0.35">LONGFT2</text>
<text x="46" y="612" fill="#00FF00" font-size="21.5" font-weight="normal" letter-spacing="0.0" stroke="#00FF00" stroke-width="0.35">0</text>
<text x="58.9" y="610" fill="#00FF00" font-size="16.5" font-weight="normal" letter-spacing="0.0" stroke="#000" stroke-width="0.3">%</text>
<text x="896.9" y="509" fill="#0000FF" font-size="16.5" font-weight="normal" letter-spacing="-0.33" stroke="#000" stroke-width="0.3">O2S11.O2SV</text>
<text x="904.8" y="542" fill="#0000FF" font-size="16.5" font-weight="normal" letter-spacing="-0.12" stroke="#000" stroke-width="0.3">0.000</text>
<text x="945.3" y="544" fill="#0000FF" font-size="21.5" font-weight="bold" letter-spacing="0.0">V</text>
<text x="896.9" y="577.5" fill="#FFFF00" font-size="16.5" font-weight="normal" letter-spacing="-0.44" stroke="#000" stroke-width="0.3">O2S12.O2SV</text>
<text x="904.8" y="610" fill="#FFFF00" font-size="16.5" font-weight="normal" letter-spacing="-0.12" stroke="#000" stroke-width="0.3">0.000</text>
<text x="945.3" y="612" fill="#FFFF00" font-size="21.5" font-weight="bold" letter-spacing="0.0">V</text>
<rect x="206" y="622" width="591" height="1" fill="#FFFF00"/>
</svg>

<!-- Data control panel -->
<div class="a" style="left:4px;top:626px;width:997px;height:3px;background:linear-gradient(#B0AC9C 0,#B0AC9C 1px,#858378 1px,#858378 2px,#C8C4B4 2px)"></div>
<div class="a" style="left:4px;top:629px;width:997px;height:4px;background:#ECE9D8"></div>
<div class="a" style="left:4px;top:633px;width:997px;height:1px;background:#ACA899"></div>
<div class="a" style="left:4px;top:634px;width:997px;height:17px;background:linear-gradient(#C8C5B8,#D6D3C6 50%,#E2DFD3)"></div>
<div class="a" style="left:4px;top:651px;width:997px;height:1px;background:#E8E5D8"></div>
<div class="st" style="left:7px;top:636px;font-size:11px">Data Control Panel</div>
<svg class="a" style="left:985px;top:636px" width="12" height="12"><path d="M1.5 1.5L10 10M10 1.5L1.5 10" stroke="#000" stroke-width="1.6"/></svg>
<div class="a" style="left:4px;top:652px;width:2px;height:82px;background:#D4D0C0"></div><div class="a" style="left:6px;top:652px;width:994px;height:83px;border:1px solid #716F64;border-right-color:#fff;border-bottom-color:#fff;background:#ECE9D8;box-shadow:inset 1px 1px 0 #FBFAF4"></div>
<div class="a" style="left:42px;top:663px;width:909px;height:8.5px;background:#fff;border:1.5px solid #000"></div>
<div class="a" style="left:41px;top:681px;width:911px;height:4px;background:linear-gradient(#8C8C84 0,#8C8C84 1px,#F4F4EE 1px,#F4F4EE 2px,#E4E2D8 2px,#E4E2D8 3px,#FFFFFF 3px);border-radius:2px 0 0 2px"></div>
<svg class="a" style="left:57px;top:673px" width="13" height="22"><path d="M1 3Q1 1 3 1H10Q12 1 12 3V15L6.5 20.5L1 15Z" fill="#F4F4F0" stroke="#8C8C84"/><rect x="1.5" y="1.5" width="10" height="2.5" fill="#3CC03C"/><path d="M1.5 15L6.5 20L11.5 15" fill="none" stroke="#3CB83C" stroke-width="1.2"/></svg>
<div class="st" style="left:17px;top:673px">0</div>
<div class="st" style="left:970px;top:673px">162</div>
<div class="st" style="left:16px;top:711px">Frame:</div>
<div class="st" style="left:61px;top:711px">3</div>
<div class="st" style="left:886px;top:711px">Time:</div>
<div class="st" style="left:921px;top:711px;letter-spacing:0.55px">00:00:01.109</div>

<!-- media buttons -->
<svg class="a" style="left:270px;top:703px" width="420" height="26">
<defs><linearGradient id="bb" x1="0" y1="0" x2="1" y2="0"><stop offset="0" stop-color="#1A5ED8"/><stop offset=".5" stop-color="#60A0F8"/><stop offset="1" stop-color="#1450C8"/></linearGradient>
<linearGradient id="gg" x1="0" y1="0" x2="0" y2="1"><stop offset="0" stop-color="#60D060"/><stop offset="1" stop-color="#20A020"/></linearGradient>
<linearGradient id="rr" x1="0" y1="0" x2="1" y2="1"><stop offset="0" stop-color="#E82818"/><stop offset="1" stop-color="#F8A030"/></linearGradient></defs>
<g fill="url(#bb)">
<rect x="7" y="6" width="4" height="14" rx="1.5"/><path d="M21 6V20L12 13Z"/>
<path d="M37 6V20L30 13ZM45 6V20L38 13Z"/>
<path d="M59 6V20L53 13Z"/><rect x="61" y="6" width="4.5" height="14" rx="1.5"/>
</g>
<circle cx="83" cy="13" r="5.2" fill="#C8C8C0" stroke="#A8A8A0"/>
<circle cx="106" cy="13" r="5.2" fill="#888880" stroke="#686860"/>
<rect x="123" y="6" width="4" height="14" rx="1.5" fill="#B0B0A8"/><rect x="130" y="6" width="4" height="14" rx="1.5" fill="#B0B0A8"/>
<path d="M146 6V20L158 13Z" fill="url(#gg)"/>
<rect x="164.5" y="2.5" width="22" height="21" rx="3" fill="#FCFCF8" stroke="#98B8E0"/>
<rect x="169" y="6" width="14" height="14" fill="url(#rr)" stroke="#C04010" stroke-width=".6"/>
<g fill="url(#bb)">
<rect x="191" y="6" width="4.5" height="14" rx="1.5"/><path d="M198 6V20L205 13Z"/>
<path d="M214 6V20L221 13ZM222 6V20L229 13Z"/>
<path d="M237 6V20L245 13Z"/><rect x="247" y="6" width="4" height="14" rx="1.5"/>
</g>
<rect x="259" y="4" width="1" height="19" fill="#C5C2B2"/><rect x="260" y="4" width="1" height="19" fill="#fff"/>
<defs><linearGradient id="gnd" x1="0" y1="0" x2="1" y2="1"><stop offset="0" stop-color="#fff"/><stop offset="1" stop-color="#C8F0C0"/></linearGradient><linearGradient id="gfd" x1="0" y1="0" x2="0" y2="1"><stop offset="0" stop-color="#B0F098"/><stop offset="1" stop-color="#40B030"/></linearGradient></defs>
<path d="M269.5 6.5H276.5L280.5 10.5V19.5H269.5Z" fill="url(#gnd)" stroke="#20A020" stroke-width="1.1"/><path d="M276.5 6.5V10.5H280.5" fill="#C8F0C0" stroke="#20A020" stroke-width=".8"/>
<path d="M294 10L299.5 8.5L300 6.5L304.5 5.5L305.5 15L297 18Z" fill="#98E080" stroke="#30A020" stroke-width=".9"/><path d="M290.5 11.5L296 10.5L296.5 12L302 11L304 16.5L293.5 19.5Z" fill="url(#gfd)" stroke="#30A020" stroke-width=".9"/>
<rect x="314.5" y="6.5" width="13" height="13" rx="1.5" fill="#B8B8B0" stroke="#989890"/><rect x="317" y="7" width="8" height="5" fill="#F0F0EC"/><path d="M318 8.5H324M318 10.5H324" stroke="#A8A8A0" stroke-width=".7"/><rect x="318" y="14" width="6" height="5" fill="#E0E0DC"/><rect x="319" y="15" width="2" height="3" fill="#A0A098"/>
<rect x="336" y="4" width="1" height="19" fill="#C5C2B2"/><rect x="337" y="4" width="1" height="19" fill="#fff"/>
<path d="M345.5 5.5L349 5.5L356 12.5V16L350.5 13.5V20.5L345.5 19Z" fill="#60D050" stroke="#30A020" stroke-width=".7"/><rect x="345.5" y="5.5" width="2.5" height="15" fill="#40B030"/>
<path d="M355 12H358V15H361V18H358V21H355V18H352V15H355Z" fill="#20B020" stroke="#fff" stroke-width=".8"/>
<path d="M369.5 15.5L375 12.5L381.5 15.5L376 19Z" fill="#F0F0EC" stroke="#888880" stroke-width=".8"/><path d="M369.5 15.5V17L376 20.5L381.5 17V15.5" fill="#B8B8B0" stroke="#888880" stroke-width=".6"/><path d="M376.5 4L372 9H374.5V14H378.5V9H381Z" fill="#40C030" stroke="#208020" stroke-width=".5"/>
<rect x="391.5" y="6.5" width="13" height="13" fill="#E8ECF8" stroke="#8890B8"/><path d="M391.5 10.5H404.5M391.5 14.5H404.5M395.5 6.5V19.5M399.5 6.5V19.5" stroke="#9098C0" stroke-width=".7"/><circle cx="398" cy="12" r="3.4" fill="#B8D8F8" stroke="#3060B0" stroke-width="1"/><path d="M400.5 14.5L404 18" stroke="#F08030" stroke-width="1.8"/>
</svg>

<!-- status bar -->
<div class="a" style="left:4px;top:735px;width:997px;height:2px;background:linear-gradient(#A8A494,#C8C4B4)"></div>
<div class="a" style="left:4px;top:737px;width:997px;height:23px;background:linear-gradient(#E6E4DA,#EDEBE4 40%,#E4E2D6 90%,#D8D5C6)"></div>
<div class="a" style="left:4px;top:737px;width:1px;height:23px;background:#FFFFFF"></div>
<div class="a" style="left:327px;top:741px;width:273px;height:17px;background:#fff;border-left:1px solid #C8C5B4"></div>
<div class="a" style="left:331px;top:745px;width:15px;height:8px;background:#F00000;border:1px solid #400000"></div>
<div class="st" style="left:350px;top:744px;font-weight:bold;font-size:11.5px">Scan Tool</div>
<div class="a" style="left:410px;top:745px;width:15px;height:8px;background:#F00000;border:1px solid #400000"></div>
<div class="st" style="left:429px;top:744px;font-weight:bold;font-size:11.5px">Vehicle</div>
<div class="a" style="left:600px;top:741px;width:1px;height:17px;background:#C8C5B4"></div>
<div class="st" style="left:606px;top:744px;letter-spacing:0.08px">John Doe - 2003 Ford Mustang 4.6L</div>
<div class="a" style="left:800px;top:741px;width:1px;height:17px;background:#C8C5B4"></div>
<div class="st" style="left:808px;top:744px;letter-spacing:0.1px">Registered To: Palmer Performance</div>
<svg class="a" style="left:986px;top:746px" width="14" height="13"><g fill="#B8B4A4"><rect x="10" y="2" width="2" height="2"/><rect x="7" y="5" width="2" height="2"/><rect x="10" y="5" width="2" height="2"/><rect x="4" y="8" width="2" height="2"/><rect x="7" y="8" width="2" height="2"/><rect x="10" y="8" width="2" height="2"/></g></svg>
</body></html>
